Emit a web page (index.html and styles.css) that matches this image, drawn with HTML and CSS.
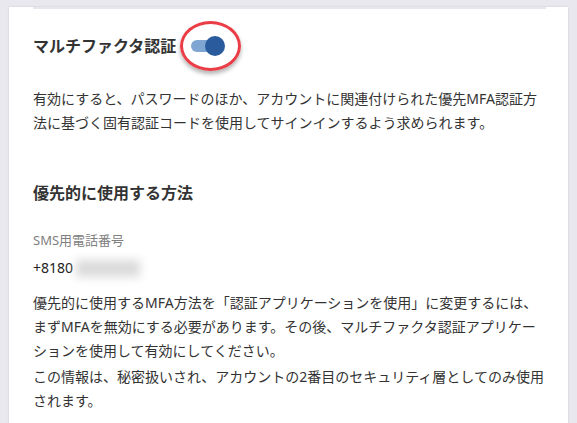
FILE: index.html
```html
<!DOCTYPE html>
<html lang="ja">
<head>
  <meta charset="UTF-8" />
  <meta name="viewport" content="width=device-width, initial-scale=1.0"/>
  <title>マルチファクタ認証</title>
  <link rel="stylesheet" href="styles.css">
</head>
<body>

<main class="panel">
  <div class="panel-body">
    <div class="divider"></div>

    <!-- MFA toggle -->
    <div class="mfa-row">
      <h3>マルチファクタ認証</h3>
      <div class="switch">
        <span class="switch-track"></span>
        <span class="switch-thumb"></span>
        <span class="callout"></span>
      </div>
    </div>
    <p class="desc">有効にすると、パスワードのほか、アカウントに関連付けられた優先MFA認証方<br>法に基づく固有認証コードを使用してサインインするよう求められます。</p>

    <!-- Preferred method -->
    <h3 class="method-title">優先的に使用する方法</h3>
    <div class="field-label">SMS用電話番号</div>
    <div class="phone">+8180<span class="masked"></span></div>
    <p class="desc note">優先的に使用するMFA方法を「認証アプリケーションを使用」に変更するには、<br>まずMFAを無効にする必要があります。その後、マルチファクタ認証アプリケー<br>ションを使用して有効にしてください。</p>
    <p class="desc note">この情報は、秘密扱いされ、アカウントの2番目のセキュリティ層としてのみ使用<br>されます。</p>
  </div>
</main>

</body>
</html>
```

FILE: styles.css
```css
html,
body {
  height: 100%;
}

body {
  margin: 0;
  background: #e8e8ee;
  font-family: 'Noto Sans', 'Noto Sans CJK JP', sans-serif;
  color: #333;
  overflow: hidden;
}

.panel {
  margin: 0 9px 0 9px;
  min-height: 100%;
  background: #fff;
  box-shadow: 0 0 2px rgba(0, 0, 0, 0.12);
}

.panel-body {
  padding: 0 22px 0 24px;
}

.divider {
  height: 2px;
  margin-top: 7px;
  background: #e6e6ec;
}

.mfa-row {
  display: flex;
  align-items: center;
  gap: 15px;
  margin-top: 25px;
  height: 24px;
}

.mfa-row h3,
.method-title {
  margin: 0;
  font-size: 16px;
  font-weight: 700;
  line-height: 24px;
  color: #333;
}

/* Toggle switch (on) */
.switch {
  position: relative;
  width: 34px;
  height: 20px;
}

.switch-track {
  position: absolute;
  left: 0;
  top: 4px;
  width: 30px;
  height: 12px;
  border-radius: 6px;
  background: #7fa6d2;
}

.switch-thumb {
  position: absolute;
  right: 0;
  top: 0;
  width: 20px;
  height: 20px;
  border-radius: 50%;
  background: #2a5b9d;
}

/* Red annotation circle */
.callout {
  position: absolute;
  left: -11px;
  top: -15px;
  width: 55px;
  height: 44px;
  border: 3px solid #ea3d45;
  border-radius: 50%;
  box-shadow: 0 3px 4px rgba(0, 0, 0, 0.3);
}

.desc {
  margin: 29px 0 0;
  font-size: 14px;
  line-height: 24px;
  white-space: nowrap;
}

.method-title {
  margin-top: 46px;
}

.field-label {
  margin-top: 25px;
  font-size: 13px;
  line-height: 20px;
  color: #808080;
}

.phone {
  display: flex;
  align-items: center;
  margin-top: 6px;
  font-size: 14px;
  line-height: 24px;
  color: #222;
}

.masked {
  width: 64px;
  height: 17px;
  margin-left: 3px;
  background: #dadada;
  filter: blur(5px);
}

.desc.note {
  margin-top: 11px;
}

.desc.note + .desc.note {
  margin-top: 2px;
}
```
